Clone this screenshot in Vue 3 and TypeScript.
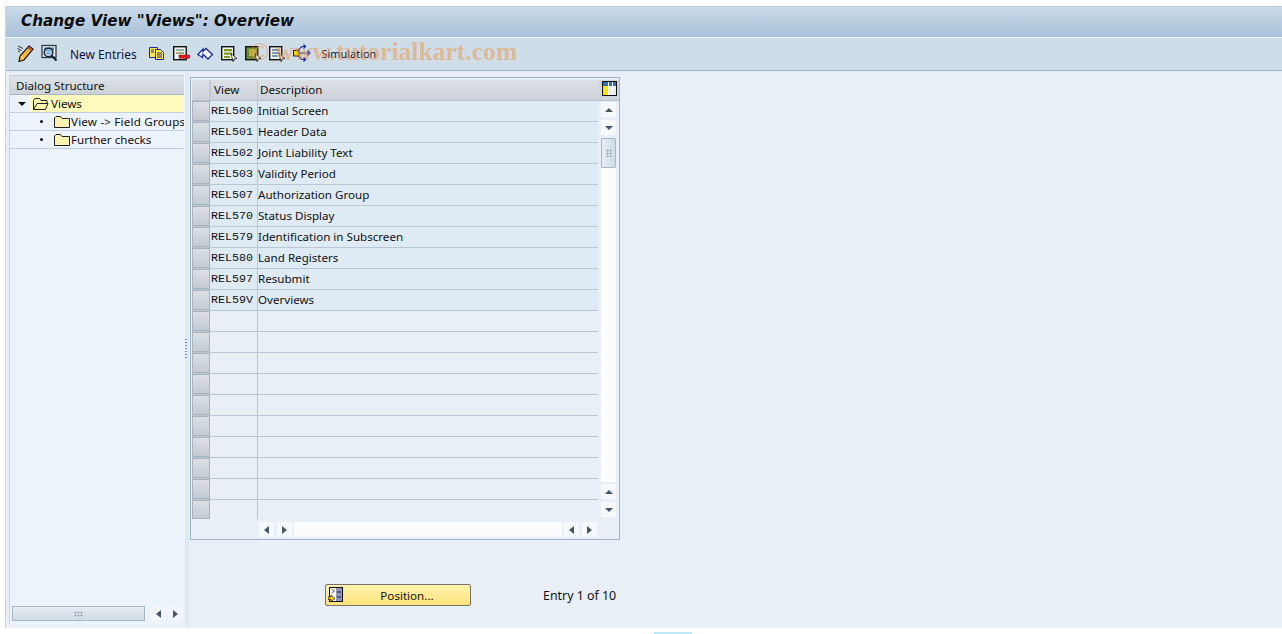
<script setup lang="ts">
const rows: [string, string][] = [
  ['REL500', 'Initial Screen'],
  ['REL501', 'Header Data'],
  ['REL502', 'Joint Liability Text'],
  ['REL503', 'Validity Period'],
  ['REL507', 'Authorization Group'],
  ['REL570', 'Status Display'],
  ['REL579', 'Identification in Subscreen'],
  ['REL580', 'Land Registers'],
  ['REL597', 'Resubmit'],
  ['REL59V', 'Overviews'],
  ['', ''], ['', ''], ['', ''], ['', ''], ['', ''],
  ['', ''], ['', ''], ['', ''], ['', ''], ['', ''],
]
</script>

<template>
  <div class="page">
    <div class="frame">
      <header class="title">Change View "Views": Overview</header>
      <div class="toolbar">
        <svg class="ic" viewBox="0 0 18 18"><path d="M1 2l5 2.500M0.500 4.500l4 2M1 7l2 1" stroke="#333" fill="none"/><path d="M12 2l4 3-9 11-5 1.500 1-5.500z" fill="#f6b73c" stroke="#1a1a1a" stroke-width="1.200"/><path d="M11 3.500l4 3" stroke="#c8372d" stroke-width="1.500"/><path d="M4 12l3 2.500" stroke="#fff3b0"/></svg>
        <svg class="ic" viewBox="0 0 18 18"><rect x="1" y="1.500" width="14" height="12" fill="#e8edf2" stroke="#2e3a44" stroke-width="1.300"/><rect x="3" y="3.500" width="10" height="3" fill="#3d7fc4"/><circle cx="7.500" cy="8.500" r="4.300" fill="#bcd6ee" stroke="#1a2630" stroke-width="1.500"/><path d="M5.500 7h4M5.500 9.500h4" stroke="#4a86c8"/><path d="M10.500 11.500l5 5" stroke="#1a2630" stroke-width="2.200"/></svg>
        <span class="tool-text new">New Entries</span>
        <svg class="ic" viewBox="0 0 18 18"><path d="M.5 3.500h8v10h-8z" fill="#ffe94a" stroke="#1c2aa0"/><path d="M6.500 5.500h5l3 3v7h-8z" fill="#ffe94a" stroke="#1c2aa0"/><path d="M8 9h5M8 11h5M8 13h5M2 6h3M2 8h3" stroke="#1c2aa0"/></svg>
        <svg class="ic" viewBox="0 0 18 18"><rect x=".7" y="2.700" width="12.500" height="13" fill="#f2f5f2" stroke="#111" stroke-width="1.400"/><path d="M3 5h8v2H3z" fill="#8fb0a0"/><path d="M3 8h8v2H3z" fill="#a4ab70"/><rect x="6" y="11" width="10.500" height="3.200" fill="#e8141c" stroke="#7a0c10" stroke-width=".5"/></svg>
        <svg class="ic" viewBox="0 0 18 18"><path d="M.7 10.500l5.300-5.500v2.500l3-3 6.500 6-4.500 4.500-5-4.700-.5 3.200z" fill="#eef3fb" stroke="#1c2aa0" stroke-width="1.300"/></svg>
        <svg class="ic" viewBox="0 0 18 18"><rect x=".7" y="2.700" width="12" height="13" fill="#f2f5f2" stroke="#111" stroke-width="1.400"/><path d="M3 5h8v2.300H3zM3 8.500h8v2.300H3zM3 12h6v2H3z" fill="#7c9a1e"/><path d="M10 9.500l6 5-2.800.3-1.200 2.700z" fill="#fff" stroke="#111" stroke-width=".8"/></svg>
        <svg class="ic" viewBox="0 0 18 18"><rect x=".7" y="2.700" width="12" height="13" fill="#6d8a30" stroke="#111" stroke-width="1.400"/><rect x="4" y="5" width="7" height="7" fill="#b5b347"/><path d="M10 9.500l6 5-2.800.3-1.200 2.700z" fill="#fff" stroke="#111" stroke-width=".8"/></svg>
        <svg class="ic" viewBox="0 0 18 18"><rect x=".7" y="2.700" width="12" height="13" fill="#eef0ee" stroke="#111" stroke-width="1.400"/><path d="M3 5h8v2H3zM3 8h8v2H3zM3 11h6v2H3z" fill="#7f97ad"/><path d="M10 9.500l6 5-2.800.3-1.200 2.700z" fill="#fff" stroke="#111" stroke-width=".8"/></svg>
        <svg class="ic" viewBox="0 0 18 18"><path d="M6 9h11M14.500 6.500L17 9l-2.500 2.500M4 7l5-4.500h3M10.500 .5l2 2-2 2M4 11l5 4.500h3M10.500 13.500l2 2-2 2" stroke="#1c2aa0" fill="none" stroke-width="1.200"/><rect x=".5" y="6.500" width="5.500" height="5.500" fill="#ffd800" stroke="#222"/></svg>
        <span class="tool-text sim">Simulation</span>
      </div>
      <main class="main">
        <aside class="tree">
          <div class="tree-head">Dialog Structure</div>
          <div class="node root">
            <span class="caret"></span>
            <span class="root-label">
              <svg class="folder" viewBox="0 0 16 12"><path d="M.5 11.500V2.500l1.500-2h4.500l1.500 2h6v3H4l-3.500 6h12l2.500-6H4" fill="#fdf3b0" stroke="#222"/></svg>
              Views
            </span>
          </div>
          <div class="node child">
            <span class="dot"></span>
            <svg class="folder" viewBox="0 0 16 12"><path d="M.5 11.500V2l1.500-1.500h4.500L8 2.500h7.500v9z" fill="#fdf3b0" stroke="#222"/></svg>
            <span class="clip wide-text">View -&gt; Field Groups</span>
          </div>
          <div class="node child">
            <span class="dot"></span>
            <svg class="folder" viewBox="0 0 16 12"><path d="M.5 11.500V2l1.500-1.500h4.500L8 2.500h7.500v9z" fill="#fdf3b0" stroke="#222"/></svg>
            <span class="clip">Further checks</span>
          </div>
          <div class="tree-scroll">
            <div class="h-thumb"><i class="grip wide"></i></div>
            <div class="sbtn"><i class="tri left"></i></div>
            <div class="sbtn"><i class="tri right"></i></div>
          </div>
        </aside>
        <div class="sash"><i class="sash-grip"></i></div>
        <section class="content">
          <div class="table-box">
            <div class="table-main">
              <div class="table-head">
                <div class="selcell"></div>
                <div class="col1 hcell">View</div>
                <div class="col2 hcell">Description</div>
                <div class="config">
                  <svg viewBox="0 0 15 15" width="15" height="15"><rect x=".5" y=".5" width="14" height="14" fill="#e9ecec" stroke="#111"/><rect x="1" y="1" width="13" height="4" fill="#2a73b8"/><rect x="1" y="5" width="5" height="9" fill="#ffe600"/><path d="M6.500 1v13M10.500 1v13" stroke="#fff"/></svg>
                </div>
              </div>
              <div class="table-body">
                <div class="grid-rows">
                  <div v-for="(r, i) in rows" :key="i" class="row" :class="{ filled: r[0] }">
                    <div class="selbtn"></div>
                    <div class="col1 code">{{ r[0] }}</div>
                    <div class="col2 desc">{{ r[1] }}</div>
                  </div>
                </div>
                <div class="v-scroll">
                  <div class="sbtn top1"><i class="tri up"></i></div>
                  <div class="sbtn top3"><i class="tri down"></i></div>
                  <div class="v-track">
                    <div class="v-thumb"><i class="grip"></i></div>
                  </div>
                  <div class="sbtn top2"><i class="tri up"></i></div>
                  <div class="sbtn top3"><i class="tri down"></i></div>
                </div>
              </div>
              <div class="h-scroll">
                <div class="sbtn"><i class="tri left"></i></div>
                <div class="sbtn"><i class="tri right"></i></div>
                <div class="h-track"></div>
                <div class="sbtn"><i class="tri left"></i></div>
                <div class="sbtn"><i class="tri right"></i></div>
              </div>
            </div>
          </div>
          <div class="actions">
            <button class="pos-btn" type="button">
              <svg class="pos-ic" viewBox="0 0 15 15" width="15" height="15"><rect x="1.500" y=".5" width="13" height="14" fill="#fff" stroke="#111"/><rect x="8" y="1" width="6" height="13" fill="#8e96bb"/><path d="M9 5h4M9 10h4" stroke="#223"/><path d="M3.500 2l3 2-3 2" fill="none" stroke="#667"/><path d="M0 10h3V8l4 3.500-4 3v-2H0z" fill="#ffd800" stroke="#111" stroke-width=".7"/></svg>
              <span>Position...</span>
            </button>
            <span class="entry">Entry 1 of 10</span>
          </div>
        </section>
      </main>
    </div>
    <div class="watermark">© www.tutorialkart.com</div>
    <div class="status-mark"></div>
  </div>
</template>

<style>
html, body { margin: 0; background: #fff; overflow: hidden; }
</style>

<style scoped>
.page {
  position: relative;
  width: 1282px;
  height: 634px;
  padding: 6px 0 6px 5px;
  box-sizing: border-box;
  background: #fff;
  font-family: "Noto Sans", "Open Sans", sans-serif;
  font-size: 11.6px;
  color: #111;
  overflow: hidden;
}
.frame {
  height: 100%;
  display: flex;
  flex-direction: column;
  border-top: 1px solid #c4d0dd;
  border-left: 1px solid #c9d5e2;
  box-sizing: border-box;
}
.title {
  height: 31px;
  flex: none;
  box-sizing: border-box;
  padding: 4px 0 0 15px;
  background: linear-gradient(#c9dae9, #a9c1d9);
  border-bottom: 1px solid #eef3f8;
  font: italic bold 15.2px "DejaVu Sans", sans-serif;
  line-height: 21px;
  color: #0c0c0c;
  white-space: nowrap;
}
.toolbar {
  height: 33px;
  flex: none;
  box-sizing: border-box;
  display: flex;
  align-items: center;
  padding: 0 0 1px 11px;
  background: #cfdde9;
  border-bottom: 1px solid #9fb5cb;
}
.ic { width: 18px; height: 18px; flex: none; margin: 0 6px 2px 0; }
.tool-text { color: #10103a; white-space: nowrap; }
.new { margin: 0 12px 0 5px; font-size: 11.9px; }
.sim { margin-left: 5px; font-size: 10.9px; }
.main { flex: 1; min-height: 0; display: flex; background: #e8eff7; }
.tree {
  width: 176px;
  flex: none;
  margin: 4px 0 4px 3px;
  box-sizing: border-box;
  display: flex;
  flex-direction: column;
  background: #edf3fb;
  border-left: 1px solid #c9d5e2;
}
.tree-head {
  height: 20px;
  line-height: 19px;
  padding-left: 6px;
  box-sizing: border-box;
  background: linear-gradient(#dfe3e8, #cdd3da);
  border-top: 1px solid #c2ccd6;
  border-bottom: 1px solid #aab6c2;
  margin-right: 1px;
}
.node {
  height: 18px;
  display: flex;
  align-items: center;
  box-sizing: border-box;
  border-bottom: 1px solid #bcd0e2;
  white-space: nowrap;
  overflow: hidden;
  margin-right: 1px;
}
.caret {
  width: 0; height: 0;
  flex: none;
  margin: 0 4px 0 8px;
  border-left: 4px solid transparent;
  border-right: 4px solid transparent;
  border-top: 4px solid #111;
}
.root-label {
  flex: 1;
  height: 100%;
  background: #fdfcbc;
  display: flex;
  align-items: center;
  padding-left: 3px;
}
.folder { width: 16px; height: 12px; flex: none; margin-right: 2px; }
.child { padding-left: 30px; }
.child .folder { margin-right: 1px; }
.dot { width: 3px; height: 3px; border-radius: 50%; background: #111; margin-right: 11px; flex: none; }
.clip { overflow: hidden; }
.wide-text { letter-spacing: .2px; }
.tree-scroll {
  margin-top: auto;
  height: 15px;
  display: flex;
  align-items: center;
  gap: 2px;
  margin-bottom: 3px;
  padding-left: 2px;
}
.h-thumb {
  width: 133px;
  height: 15px;
  box-sizing: border-box;
  border: 1px solid #a8b8c6;
  background: linear-gradient(#e6edf3, #cfdce7);
  display: flex;
  align-items: center;
  justify-content: center;
  margin-right: 4px;
}
.sbtn {
  width: 15px;
  height: 15px;
  flex: none;
  background: #f6f9fc;
  display: flex;
  align-items: center;
  justify-content: center;
}
.tree-scroll .sbtn { background: #f2f6fb; }
.tri { width: 0; height: 0; display: block; }
.tri.left { border: 4px solid transparent; border-left: 0; border-right: 5px solid #44576a; }
.tri.right { border: 4px solid transparent; border-right: 0; border-left: 5px solid #44576a; }
.tri.up { border: 4px solid transparent; border-top: 0; border-bottom: 4px solid #44576a; }
.tri.down { border: 4px solid transparent; border-bottom: 0; border-top: 4px solid #44576a; }
.grip {
  width: 6px;
  height: 8px;
  display: block;
  background-image: radial-gradient(#9aa8b5 45%, transparent 50%);
  background-size: 3px 3px;
}
.grip.wide { width: 9px; height: 6px; }
.sash {
  width: 4px;
  flex: none;
  margin-bottom: 1px;
  background: #dfe9f1;
  display: flex;
  align-items: center;
}
.sash-grip {
  width: 2px;
  height: 20px;
  background-image: repeating-linear-gradient(#7f8f9e 0 1px, transparent 1px 3px);
}
.content { flex: 1; min-width: 0; display: flex; flex-direction: column; padding-top: 6px; }
.table-box {
  width: 430px;
  height: 463px;
  box-sizing: border-box;
  border: 1px solid #9fb5cb;
  padding: 2px 0 0 1px;
  margin-left: 1px;
}
.table-main { display: flex; flex-direction: column; }
.table-head { display: flex; height: 21px; background: linear-gradient(#dde1e6, #cdd2d9); border-bottom: 1px solid #b3c0cd; box-sizing: border-box; }
.selcell { width: 19px; flex: none; border-right: 2px solid #c2cad2; box-sizing: border-box; }
.hcell { line-height: 20px; padding-left: 3px; }
.col1 { width: 47px; flex: none; box-sizing: border-box; border-right: 1px solid #b9c6d3; }
.col2 { width: 340px; flex: none; box-sizing: border-box; }
.table-head .col2 { padding-left: 2px; }
.config {
  width: 20px;
  flex: none;
  display: flex;
  align-items: flex-start;
  justify-content: center;
  padding-top: 1px;
  box-sizing: border-box;
  background: #cfd6dc;
  margin-left: 1px;
}
.table-body { display: flex; }
.grid-rows { width: 406px; flex: none; }
.row { display: flex; height: 21px; box-sizing: border-box; border-bottom: 1px solid #b9c7d4; }
.row:last-child { border-bottom: 0; height: 19px; }
.row.filled { background: #deeaf4; }
.selbtn {
  width: 18px;
  flex: none;
  box-sizing: border-box;
  margin: 0 1px 0 0;
  border: 1px solid #a9b4be;
  background: linear-gradient(#dce0e5, #c5cbd2);
}
.code { font-family: "Liberation Mono", monospace; font-size: 11.7px; line-height: 21px; color: #111; }
.desc { line-height: 20px; padding-left: 0; }
.v-scroll { width: 18px; flex: none; display: flex; flex-direction: column; padding-left: 3px; box-sizing: border-box; }
.top1 { margin-top: 1px; }
.top2 { margin-top: 2px; }
.top3 { margin-top: 3px; }
.v-track { height: 344px; width: 15px; background: #fafcfd; margin-top: 3px; flex: none; }
.v-thumb {
  width: 15px;
  height: 30px;
  box-sizing: border-box;
  border: 1px solid #a8b8c6;
  border-radius: 1px;
  background: linear-gradient(90deg, #e9eff4, #cfdce7);
  display: flex;
  align-items: center;
  justify-content: center;
}
.h-scroll { display: flex; gap: 3px; padding: 3px 0 0 67px; }
.h-track { width: 268px; height: 15px; background: #fafcfd; margin: 0 -1px; }
.actions { display: flex; align-items: center; margin-top: 44px; }
.pos-btn {
  width: 146px;
  height: 22px;
  margin-left: 136px;
  padding: 0 0 0 18px;
  position: relative;
  border: 1px solid #77736a;
  border-radius: 2px;
  background: linear-gradient(#fff3ae, #ffe27a);
  font: inherit;
  color: #111;
}
.pos-ic { position: absolute; left: 2px; top: 2px; }
.entry { margin-left: 72px; font-size: 12.4px; }
.watermark {
  position: absolute;
  left: 250px;
  top: 37px;
  font: bold 25.6px "Liberation Serif", serif;
  color: rgba(234, 150, 70, .5);
  white-space: nowrap;
  pointer-events: none;
}
.status-mark { position: absolute; left: 654px; top: 632px; width: 38px; height: 2px; background: #bfe9f5; }
</style>
